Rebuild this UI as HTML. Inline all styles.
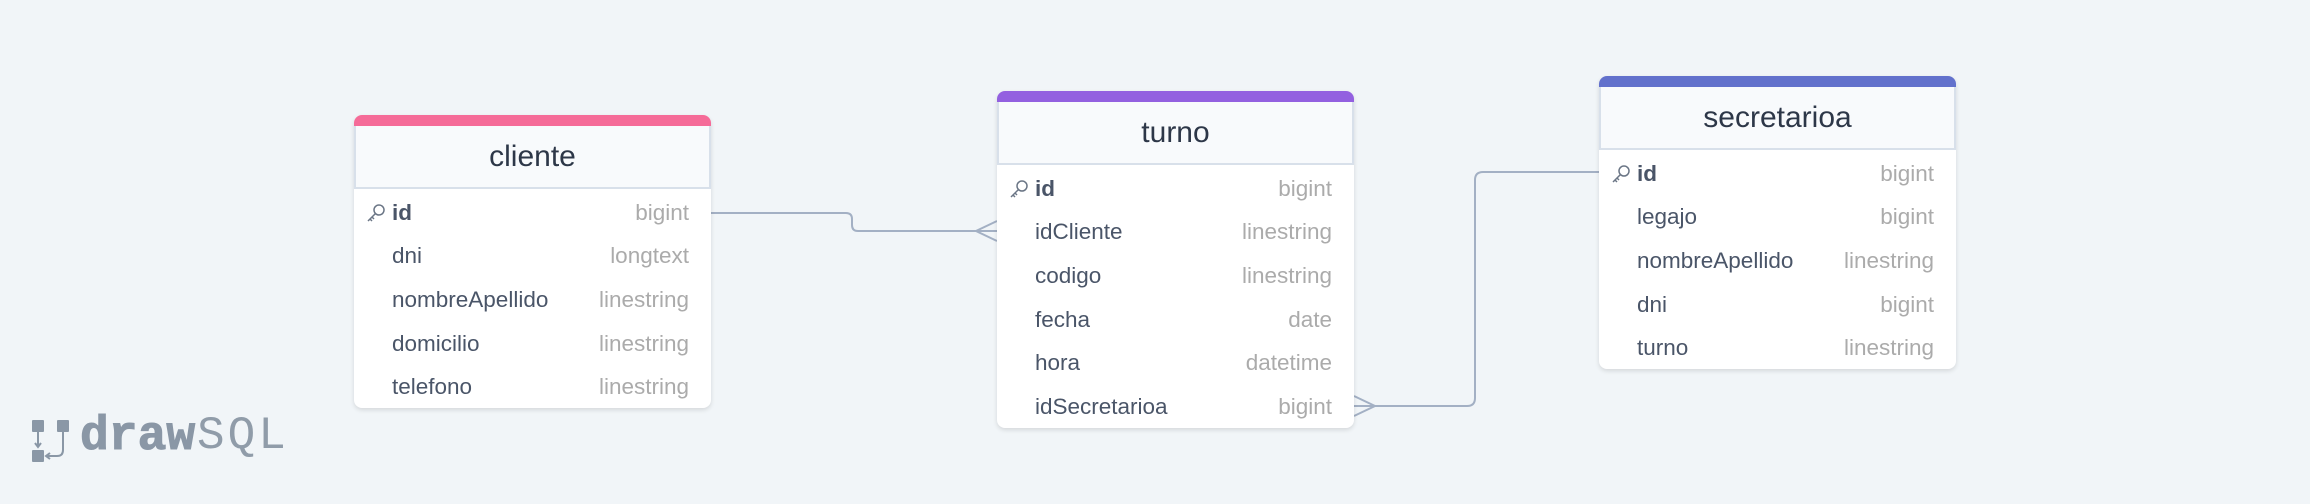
<!DOCTYPE html>
<html><head><meta charset="utf-8"><style>
*{margin:0;padding:0;box-sizing:border-box}
body{width:2310px;height:504px;background:#f1f5f8;position:relative;overflow:hidden;font-family:"Liberation Sans",sans-serif}
.card{position:absolute;background:#fff;border-radius:8px;box-shadow:0 2px 5px rgba(0,0,0,.12);overflow:hidden}
.bar{height:11px}
.hd{height:63px;background:#f8fafc;border:2px solid #d8e0ea;border-top:none;display:flex;align-items:center;justify-content:center;font-size:30px;color:#2d3748}
.row{height:43.6px;position:relative;font-size:22.5px;color:#4a5568}
.row .n{position:absolute;left:38px;top:50%;transform:translateY(-50%)}
.row .t{position:absolute;right:22px;top:50%;transform:translateY(-50%);color:#ababab}
.row b{font-weight:bold}
.key{position:absolute;left:12px;top:50%;transform:translateY(-50%)}
</style></head><body>
<svg width="2310" height="504" style="position:absolute;left:0;top:0">
<g fill="none" stroke="#a3b0c4" stroke-width="2">
<path d="M711 213 H846 Q852 213 852 219 V225 Q852 231 858 231 H997"/>
<path d="M997 221 L976 231 L997 241"/>
<path d="M1354 406 H1467 Q1475 406 1475 398 V180 Q1475 172 1483 172 H1600"/>
<path d="M1354 396 L1375 406 L1354 416"/>
</g>
<g fill="#8a97a6">
<rect x="32" y="420" width="12" height="12" rx="1"/>
<rect x="32" y="450" width="12" height="12" rx="1"/>
<rect x="57" y="420" width="12" height="12" rx="1"/>
</g>
<g fill="none" stroke="#8a97a6" stroke-width="2">
<path d="M38 432 V446 M35 443 L38 447 L41 443"/>
<path d="M63 432 V450 Q63 456 57 456 H47 M50 453 L46 456 L50 459"/>
</g>
</svg>
<div style="position:absolute;left:80px;top:410px;font-family:'Liberation Mono',monospace;font-weight:bold;font-size:48px;color:#8a97a6;letter-spacing:0px;-webkit-text-stroke:1px #8a97a6">draw</div>
<div style="position:absolute;left:197px;top:410px;font-family:'Liberation Mono',monospace;font-size:46px;color:#909ca9;letter-spacing:3px">SQL</div>

<div class="card" style="left:354px;top:115px;width:357px;height:293px">
<div class="bar" style="background:#f56b98"></div>
<div class="hd">cliente</div>
<div style="height:2px"></div>
<div class="row"><svg class="key" width="20" height="20" viewBox="0 0 20 20"><g fill="none" stroke="#6b7686" stroke-width="1.5"><circle cx="13" cy="7" r="5"/><path d="M9.5 10.5 L2 18 M4 16 L6 18 M6 14 L8 16"/></g></svg><span class="n"><b>id</b></span><span class="t">bigint</span></div>
<div class="row"><span class="n">dni</span><span class="t">longtext</span></div>
<div class="row"><span class="n">nombreApellido</span><span class="t">linestring</span></div>
<div class="row"><span class="n">domicilio</span><span class="t">linestring</span></div>
<div class="row"><span class="n">telefono</span><span class="t">linestring</span></div>
</div>

<div class="card" style="left:997px;top:91px;width:357px;height:337px">
<div class="bar" style="background:#9360e0"></div>
<div class="hd">turno</div>
<div style="height:2px"></div>
<div class="row"><svg class="key" width="20" height="20" viewBox="0 0 20 20"><g fill="none" stroke="#6b7686" stroke-width="1.5"><circle cx="13" cy="7" r="5"/><path d="M9.5 10.5 L2 18 M4 16 L6 18 M6 14 L8 16"/></g></svg><span class="n"><b>id</b></span><span class="t">bigint</span></div>
<div class="row"><span class="n">idCliente</span><span class="t">linestring</span></div>
<div class="row"><span class="n">codigo</span><span class="t">linestring</span></div>
<div class="row"><span class="n">fecha</span><span class="t">date</span></div>
<div class="row"><span class="n">hora</span><span class="t">datetime</span></div>
<div class="row"><span class="n">idSecretarioa</span><span class="t">bigint</span></div>
</div>

<div class="card" style="left:1599px;top:76px;width:357px;height:293px">
<div class="bar" style="background:#6271cc"></div>
<div class="hd">secretarioa</div>
<div style="height:2px"></div>
<div class="row"><svg class="key" width="20" height="20" viewBox="0 0 20 20"><g fill="none" stroke="#6b7686" stroke-width="1.5"><circle cx="13" cy="7" r="5"/><path d="M9.5 10.5 L2 18 M4 16 L6 18 M6 14 L8 16"/></g></svg><span class="n"><b>id</b></span><span class="t">bigint</span></div>
<div class="row"><span class="n">legajo</span><span class="t">bigint</span></div>
<div class="row"><span class="n">nombreApellido</span><span class="t">linestring</span></div>
<div class="row"><span class="n">dni</span><span class="t">bigint</span></div>
<div class="row"><span class="n">turno</span><span class="t">linestring</span></div>
</div>
</body></html>
